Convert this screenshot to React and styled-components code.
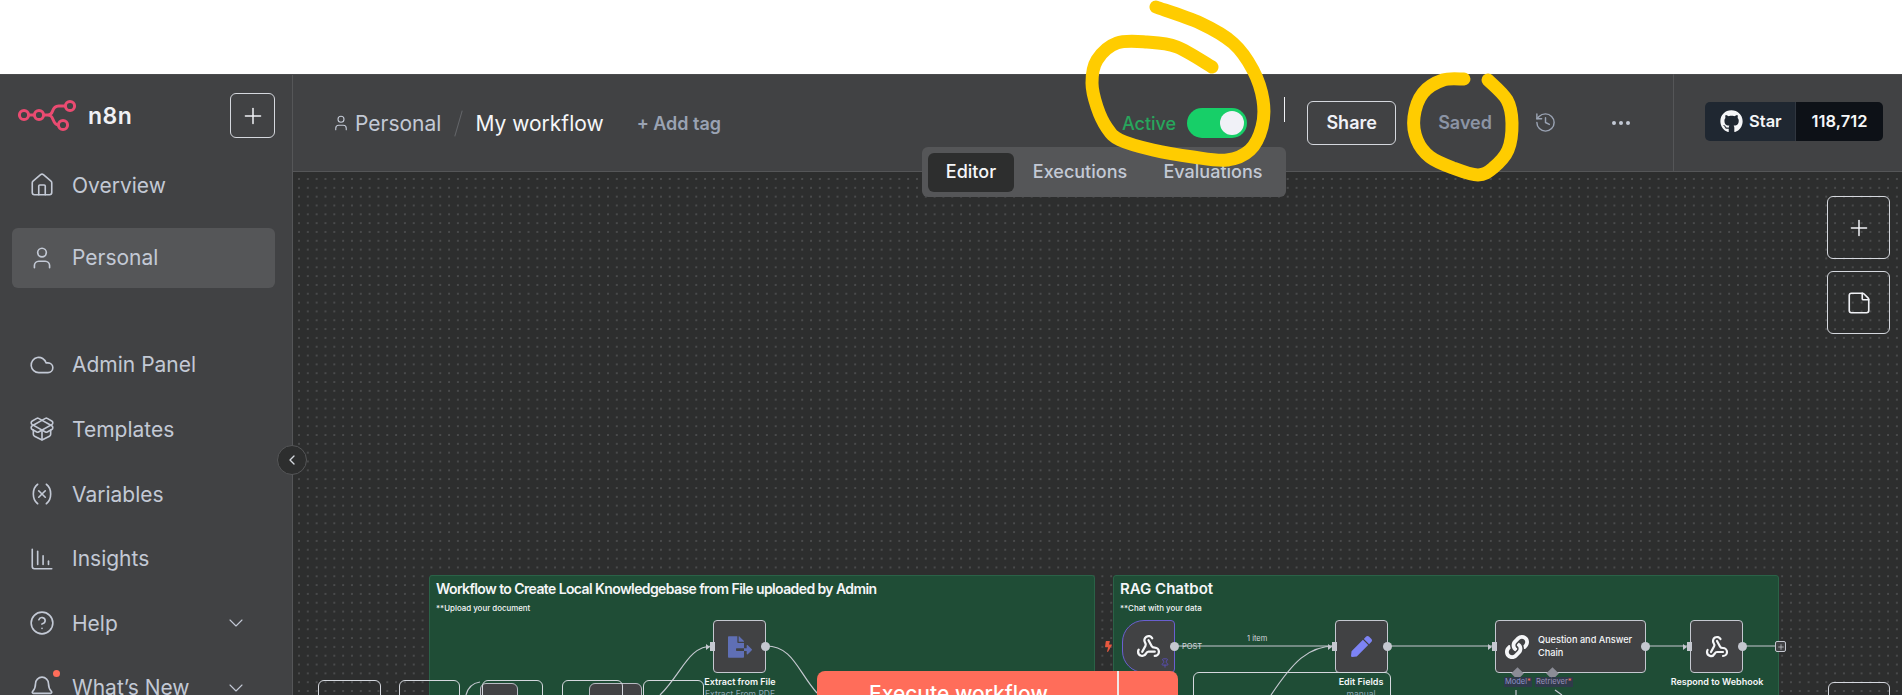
import React from "react";
import styled, { createGlobalStyle } from "styled-components";
import {
  Bell,
  ChartColumnDecreasing,
  ChevronDown,
  ChevronLeft,
  CircleHelp,
  Cloud,
  Ellipsis,
  History,
  House,
  PackageOpen,
  Pin,
  Plus,
  StickyNote as NoteIcon,
  User,
  Variable,
  Webhook,
} from "lucide-react";
import { FaBolt, FaFileExport, FaGithub, FaLink, FaPen } from "react-icons/fa";

const GlobalStyle = createGlobalStyle`
  html, body {
    margin: 0;
    height: 100%;
    background: #fff;
    overflow: hidden;
  }
  * {
    box-sizing: border-box;
  }
  body {
    font-family: Inter, "Liberation Sans", sans-serif;
  }
`;

const Page = styled.div`
  position: relative;
  height: 695px;
  padding-top: 74px;
  overflow: hidden;
`;

const Shell = styled.div`
  display: flex;
  height: 621px;
  border-top: 1px solid #4a4b4d;
  background: #414244;
`;

/* sidebar */
const Sidebar = styled.aside`
  position: relative;
  width: 293px;
  flex: none;
  padding: 18px 17px 0 12px;
  border-right: 1px solid #555658;
`;

const Brand = styled.div`
  display: flex;
  align-items: center;
  justify-content: space-between;
  height: 45px;
  padding-left: 5px;
`;

const LogoWrap = styled.div`
  display: flex;
  align-items: center;
  gap: 11px;
  color: #f0f1f5;
  font-size: 23px;
  font-weight: 600;
  letter-spacing: 0.5px;
`;

const SquareButton = styled.button`
  display: flex;
  align-items: center;
  justify-content: center;
  width: ${(p) => p.$size}px;
  height: ${(p) => p.$size}px;
  padding: 0;
  border: 1px solid #d5d8de;
  border-radius: 6px;
  background: #414244;
  color: #f0f1f5;
`;

const CanvasButton = styled(SquareButton)`
  background: transparent;
`;

const NavList = styled.nav`
  display: flex;
  flex-direction: column;
  margin-top: ${(p) => p.$top}px;
`;

const NavItem = styled.a`
  display: flex;
  align-items: center;
  height: ${(p) => (p.$active ? 60 : 64.6)}px;
  margin-top: ${(p) => (p.$active ? 10 : 0)}px;
  padding: 0 0 0 17px;
  gap: 17px;
  border-radius: 6px;
  background: ${(p) => (p.$active ? "#555658" : "transparent")};
  color: #c3c9d5;
  font-size: 21px;
  svg {
    flex: none;
  }
`;

const NavLabel = styled.span`
  flex: 1;
`;

const NavChevron = styled(ChevronDown)`
  margin-right: 27px;
  stroke-width: 1.1;
`;

const BellWrap = styled.span`
  position: relative;
  display: flex;
  &::after {
    content: "";
    position: absolute;
    top: -5px;
    right: -5px;
    width: 7px;
    height: 7px;
    border-radius: 50%;
    background: #ff6d5a;
  }
`;

const CollapseButton = styled.button`
  position: absolute;
  top: 370px;
  right: -15px;
  z-index: 5;
  display: flex;
  align-items: center;
  justify-content: center;
  width: 30px;
  height: 30px;
  padding: 0;
  border: 1px solid #555658;
  border-radius: 50%;
  background: #2d2e2e;
  color: #d5d8de;
`;

/* header */
const Main = styled.main`
  flex: 1;
  display: flex;
  flex-direction: column;
  min-width: 0;
`;

const Header = styled.header`
  position: relative;
  display: flex;
  align-items: stretch;
  flex: none;
  height: 97px;
  border-bottom: 1px solid #555658;
`;

const HeaderLeft = styled.div`
  flex: 1;
  display: flex;
  align-items: center;
  padding: 0 0 0 39px;
`;

const Crumb = styled.span`
  display: flex;
  align-items: center;
  gap: 5px;
  color: #c3c9d5;
  font-size: 21px;
`;

const Slash = styled.span`
  width: 1px;
  height: 27px;
  margin: 0 16px 0 17px;
  background: #64666a;
  transform: rotate(16deg);
`;

const WorkflowName = styled.span`
  color: #f5f6f8;
  font-size: 21px;
`;

const AddTag = styled.span`
  margin-left: 33px;
  color: #9aa3b3;
  font-size: 18px;
  font-weight: 600;
`;

const HeaderActions = styled.div`
  display: flex;
  align-items: center;
  width: 1380px;
  flex: none;
  margin-left: -830px;
  justify-content: flex-end;
  margin-top: -1px;
`;

const ActiveLabel = styled.span`
  margin-right: 11px;
  padding-top: 2px;
  color: #27a65c;
  font-size: 18px;
  font-weight: 500;
`;

const Toggle = styled.span`
  display: flex;
  align-items: center;
  justify-content: flex-end;
  width: 60px;
  height: 30px;
  padding-right: 3px;
  border-radius: 15px;
  background: #17cf68;
  &::after {
    content: "";
    width: 24px;
    height: 24px;
    border-radius: 50%;
    background: #f0f1f7;
  }
`;

const ThinRule = styled.span`
  width: 1px;
  height: 25px;
  margin: -26px 22px 0 37px;
  background: #f0f1f5;
`;

const ShareButton = styled.button`
  width: 89px;
  height: 44px;
  padding: 0;
  border: 1px solid #d5d8de;
  border-radius: 6px;
  background: transparent;
  color: #f0f1f7;
  font-family: inherit;
  font-size: 18px;
  font-weight: 600;
`;

const SavedLabel = styled.span`
  margin-left: 42px;
  color: #8b94a5;
  font-size: 18px;
  font-weight: 600;
`;

const HistoryIcon = styled(History)`
  margin-left: 42px;
  color: #9aa3b3;
`;

const MoreIcon = styled(Ellipsis)`
  margin-left: 52px;
  color: #c3c9d5;
`;

const StarArea = styled.div`
  display: flex;
  align-items: center;
  margin-left: 40px;
  height: 100%;
  padding: 0 19px 3px 31px;
  border-left: 1px solid #555658;
`;

const StarBadge = styled.div`
  display: flex;
  height: 39px;
  border-radius: 5px;
  overflow: hidden;
  color: #f5f6f8;
  font-size: 16.5px;
  font-weight: 600;
`;

const StarLeft = styled.span`
  display: flex;
  align-items: center;
  gap: 6px;
  width: 91px;
  padding-left: 15px;
  background: #1f2731;
  border-right: 1px solid #30363f;
`;

const StarCount = styled.span`
  display: flex;
  align-items: center;
  justify-content: center;
  width: 87px;
  background: #0d1117;
`;

const Tabs = styled.div`
  position: absolute;
  top: 72px;
  left: 629px;
  z-index: 3;
  display: flex;
  align-items: center;
  height: 50px;
  padding: 0 6px;
  border-radius: 6px;
  background: #555658;
`;

const Tab = styled.span`
  display: flex;
  align-items: center;
  justify-content: center;
  height: 39px;
  width: ${(p) => p.$w}px;
  padding-bottom: 1px;
  border-radius: 6px;
  background: ${(p) => (p.$active ? "#2d2e2e" : "transparent")};
  color: ${(p) => (p.$active ? "#f5f6f8" : "#c3c9d5")};
  font-size: 18px;
  font-weight: 500;
`;

/* canvas */
const Canvas = styled.section`
  position: relative;
  flex: 1;
  overflow: hidden;
  background-color: #2d2e2e;
  background-image: radial-gradient(circle at 1px 1px, #4a4b4c 0.7px, transparent 1px);
  background-size: 8.84px 8.84px;
  background-position: 5px 6px;
`;

const Sticky = styled.div`
  position: absolute;
  top: 403px;
  left: ${(p) => p.$x}px;
  width: ${(p) => p.$w}px;
  height: 130px;
  padding: 4px 6px;
  border: 1px solid #2a6247;
  border-radius: 3px;
  background: #1f4d36;
  color: #f5f6f8;
`;

const StickyTitle = styled.div`
  font-size: ${(p) => p.$size}px;
  font-weight: 600;
  letter-spacing: ${(p) => p.$spacing || 0}px;
  line-height: 18px;
`;

const StickyNote = styled.div`
  margin-top: 4px;
  font-size: 7.9px;
  font-weight: 500;
  line-height: 12px;
`;

const Edges = styled.svg`
  position: absolute;
  inset: 0;
  width: 100%;
  height: 100%;
  z-index: 1;
  fill: none;
  stroke: #c5c8d0;
  stroke-width: 1.2;
`;

const Node = styled.div`
  position: absolute;
  left: ${(p) => p.$x}px;
  top: 448px;
  z-index: 2;
  display: flex;
  align-items: center;
  justify-content: center;
  gap: 9px;
  width: ${(p) => p.$w || 53}px;
  height: 53px;
  border: 1.5px solid ${(p) => (p.$pinned ? "#6a5fd0" : "#c5c8d0")};
  border-radius: ${(p) => (p.$pinned ? "22px 4px 4px 22px" : "4px")};
  background: #414244;
  color: #f5f6f8;
`;

const NodeName = styled.div`
  position: absolute;
  left: ${(p) => p.$x}px;
  top: 504px;
  z-index: 2;
  width: 130px;
  transform: translateX(-50%);
  color: #f5f6f8;
  font-size: 9px;
  font-weight: 600;
  line-height: 12px;
  text-align: center;
`;

const NodeSub = styled.div`
  color: #8fa7b5;
  font-size: 8.5px;
  font-weight: 400;
`;

const Port = styled.span`
  position: absolute;
  top: 50%;
  right: -4.5px;
  width: 9px;
  height: 9px;
  margin-top: -4.5px;
  border-radius: 50%;
  background: #c5c8d0;
`;

const InPort = styled.span`
  position: absolute;
  top: 50%;
  left: -4px;
  width: 5px;
  height: 9px;
  margin-top: -4.5px;
  background: #c5c8d0;
  &::before {
    content: "";
    position: absolute;
    left: -4px;
    top: 1.5px;
    border-left: 4px solid #c5c8d0;
    border-top: 3px solid transparent;
    border-bottom: 3px solid transparent;
  }
`;

const Diamond = styled.span`
  position: absolute;
  left: ${(p) => p.$x}px;
  bottom: -6px;
  width: 9px;
  height: 9px;
  background: #8b8c96;
  transform: rotate(45deg);
`;

const PinMark = styled(Pin)`
  position: absolute;
  right: 4px;
  bottom: 4px;
  color: #5b4fc0;
`;

const NodeText = styled.span`
  width: 98px;
  font-size: 9.2px;
  font-weight: 500;
  line-height: 12.5px;
`;

const Bolt = styled(FaBolt)`
  position: absolute;
  left: 810px;
  top: 469px;
  z-index: 2;
  color: #e5583f;
`;

const EdgeLabel = styled.span`
  position: absolute;
  left: ${(p) => p.$x}px;
  top: ${(p) => p.$y}px;
  z-index: 2;
  padding: 0 1px;
  background: ${(p) => p.$bg || "transparent"};
  color: ${(p) => p.$color || "#d5d8de"};
  font-size: 7.5px;
  line-height: 10px;
`;

const Required = styled.span`
  color: #ff6d5a;
`;

const AddNode = styled.span`
  position: absolute;
  left: 1482px;
  top: 469px;
  z-index: 2;
  display: flex;
  align-items: center;
  justify-content: center;
  width: 11px;
  height: 11px;
  border: 1px solid #c5c8d0;
  border-radius: 2px;
  background: #414244;
  color: #d5d8de;
`;

const GhostBox = styled.div`
  position: absolute;
  left: ${(p) => p.$x}px;
  top: ${(p) => p.$y}px;
  z-index: ${(p) => (p.$solid ? 1 : 3)};
  width: ${(p) => p.$w}px;
  height: 80px;
  border: 1px solid ${(p) => (p.$solid ? "#b9bcc4" : "#d5d8de")};
  border-radius: 6px;
  background: ${(p) => (p.$solid ? "#414244" : "transparent")};
`;

const ExecuteButton = styled.button`
  position: absolute;
  left: 524px;
  top: 499px;
  z-index: 4;
  display: flex;
  width: 361px;
  height: 70px;
  padding: 0;
  border: 0;
  border-radius: 8px;
  background: #ff6d5a;
  color: #fff;
  font-family: inherit;
  font-size: 21px;
  font-weight: 500;
`;

const ExecuteLabel = styled.span`
  width: 302px;
  height: 100%;
  padding: 10px 0 0 52px;
  border-right: 2px solid #f0e9e6;
  text-align: left;
  white-space: nowrap;
`;

const ZoomRail = styled.div`
  position: absolute;
  top: 24px;
  right: 12px;
  z-index: 3;
  display: flex;
  flex-direction: column;
  gap: 12px;
`;

const CornerButton = styled(GhostBox)`
  left: 1535px;
  top: 510px;
  width: 62px;
`;

const Scribble = styled.svg`
  position: absolute;
  inset: 0;
  z-index: 10;
  width: 1902px;
  height: 695px;
  fill: none;
  stroke: #ffcc00;
  stroke-width: 13;
  stroke-linecap: round;
  stroke-linejoin: round;
  pointer-events: none;
`;

const smooth = (pts) => {
  let d = `M${pts[0][0]} ${pts[0][1]}`;
  for (let i = 0; i < pts.length - 1; i++) {
    const p0 = pts[i - 1] || pts[i];
    const p1 = pts[i];
    const p2 = pts[i + 1];
    const p3 = pts[i + 2] || p2;
    d += ` C${p1[0] + (p2[0] - p0[0]) / 6} ${p1[1] + (p2[1] - p0[1]) / 6} ${p2[0] - (p3[0] - p1[0]) / 6} ${p2[1] - (p3[1] - p1[1]) / 6} ${p2[0]} ${p2[1]}`;
  }
  return d;
};

const activeRing = [
  [1156, 7], [1200, 23], [1233, 43], [1253, 70], [1263, 100], [1262, 127], [1250, 150],
  [1227, 160], [1193, 157], [1153, 150], [1120, 140], [1107, 128], [1097, 107], [1092, 83],
  [1097, 60], [1117, 43], [1147, 42], [1177, 47], [1212, 67],
];

const savedRing = [
  [1464, 79], [1443, 80], [1423, 93], [1414, 117], [1417, 140], [1430, 157], [1453, 168],
  [1478, 175], [1493, 168], [1508, 150], [1512, 123], [1507, 100], [1488, 80],
];

const N8nLogo = () => (
  <svg width="60" height="33" viewBox="0 0 60 33" fill="none" stroke="#ea4b71" strokeWidth="3">
    <circle cx="7" cy="16" r="4.6" />
    <circle cx="22" cy="16" r="4.6" />
    <circle cx="53" cy="7" r="4.6" />
    <circle cx="46" cy="26" r="4.6" />
    <path d="M11.600 16h5.800M26.600 16h4c3 0 4 -1 5 -4s2.500 -5 6 -5h6.800M30.600 16c3 0 4 1 5.400 4.500s2.500 5.500 5.400 5.500" />
  </svg>
);

const topItems = [
  { label: "Overview", Icon: House },
  { label: "Personal", Icon: User, active: true },
];

const lowerItems = [
  { label: "Admin Panel", Icon: Cloud },
  { label: "Templates", Icon: PackageOpen },
  { label: "Variables", Icon: Variable },
  { label: "Insights", Icon: ChartColumnDecreasing },
  { label: "Help", Icon: CircleHelp, more: true },
];

const App = () => {
  return (
    <Page>
      <GlobalStyle />
      <Shell>
        <Sidebar>
          <Brand>
            <LogoWrap>
              <N8nLogo />
              n8n
            </LogoWrap>
            <SquareButton $size={45}>
              <Plus size={26} strokeWidth={1.4} />
            </SquareButton>
          </Brand>
          <NavList $top={15}>
            {topItems.map(({ label, Icon, active }) => (
              <NavItem key={label} $active={active}>
                <Icon size={26} strokeWidth={1.5} />
                <NavLabel>{label}</NavLabel>
              </NavItem>
            ))}
          </NavList>
          <NavList $top={45}>
            {lowerItems.map(({ label, Icon, more }) => (
              <NavItem key={label}>
                <Icon size={26} strokeWidth={1.5} />
                <NavLabel>{label}</NavLabel>
                {more && <NavChevron size={24} />}
              </NavItem>
            ))}
            <NavItem>
              <BellWrap>
                <Bell size={26} strokeWidth={1.5} />
              </BellWrap>
              <NavLabel>What’s New</NavLabel>
              <NavChevron size={24} />
            </NavItem>
          </NavList>
          <CollapseButton>
            <ChevronLeft size={16} />
          </CollapseButton>
        </Sidebar>
        <Main>
          <Header>
            <HeaderLeft>
              <Crumb>
                <User size={18} strokeWidth={1.5} />
                Personal
              </Crumb>
              <Slash />
              <WorkflowName>My workflow</WorkflowName>
              <AddTag>+ Add tag</AddTag>
            </HeaderLeft>
            <HeaderActions>
              <ActiveLabel>Active</ActiveLabel>
              <Toggle />
              <ThinRule />
              <ShareButton>Share</ShareButton>
              <SavedLabel>Saved</SavedLabel>
              <HistoryIcon size={23} strokeWidth={1.5} />
              <MoreIcon size={24} />
              <StarArea>
                <StarBadge>
                  <StarLeft>
                    <FaGithub size={23} />
                    Star
                  </StarLeft>
                  <StarCount>118,712</StarCount>
                </StarBadge>
              </StarArea>
            </HeaderActions>
            <Tabs>
              <Tab $w={86} $active>
                Editor
              </Tab>
              <Tab $w={132}>Executions</Tab>
              <Tab $w={134}>Evaluations</Tab>
            </Tabs>
          </Header>
          <Canvas>
            <Sticky $x={136} $w={666}>
              <StickyTitle $size={14} $spacing={-0.6}>Workflow to Create Local Knowledgebase from File uploaded by Admin</StickyTitle>
              <StickyNote>**Upload your document</StickyNote>
            </Sticky>
            <Sticky $x={820} $w={666}>
              <StickyTitle $size={15}>RAG Chatbot</StickyTitle>
              <StickyNote>**Chat with your data</StickyNote>
            </Sticky>

            <Edges>
              <path d="M367 523C390 500 395 474 420 474" />
              <path d="M473 474C500 474 505 500 524 521" />
              <path d="M173 523C175 515 180 511 187 510" />
              <path d="M882 474H1042M1094 474H1202M1352 474H1397M1450 474H1482" />
              <path d="M978 523C1000 490 1015 474 1042 474" />
              <path d="M1223 518V523M1262 518L1269 523" />
            </Edges>

            <GhostBox $x={25} $y={508} $w={63} />
            <GhostBox $x={106} $y={508} $w={61} />
            <GhostBox $x={189} $y={508} $w={61} />
            <GhostBox $x={269} $y={508} $w={61} />
            <GhostBox $x={350} $y={508} $w={61} />
            <GhostBox $x={187} $y={511} $w={38} $solid />
            <GhostBox $x={296} $y={511} $w={53} $solid />
            <GhostBox $x={900} $y={500} $w={198} />

            <Node $x={420}>
              <InPort />
              <FaFileExport size={24} color="#5f6fb5" />
              <Port />
            </Node>
            <NodeName $x={447}>
              Extract from File
              <NodeSub>Extract From PDF</NodeSub>
            </NodeName>

            <Bolt size={11} />
            <Node $x={829} $pinned>
              <Webhook size={25} strokeWidth={2.2} />
              <PinMark size={10} />
              <Port />
            </Node>
            <EdgeLabel $x={888} $y={470}>POST</EdgeLabel>
            <EdgeLabel $x={953} $y={462}>1 item</EdgeLabel>

            <Node $x={1042}>
              <InPort />
              <FaPen size={21} color="#7d83f5" />
              <Port />
            </Node>
            <NodeName $x={1068}>
              Edit Fields
              <NodeSub>manual</NodeSub>
            </NodeName>

            <Node $x={1202} $w={151}>
              <InPort />
              <FaLink size={24} />
              <NodeText>Question and Answer Chain</NodeText>
              <Port />
              <Diamond $x={17} />
              <Diamond $x={52} />
            </Node>
            <EdgeLabel $x={1211} $y={505} $bg="#2f3a4a" $color="#8f93c9">Model<Required>*</Required></EdgeLabel>
            <EdgeLabel $x={1242} $y={505} $bg="#2f3a4a" $color="#9a90b8">Retriever<Required>*</Required></EdgeLabel>

            <Node $x={1397}>
              <InPort />
              <Webhook size={24} strokeWidth={2.2} />
              <Port />
            </Node>
            <NodeName $x={1424}>Respond to Webhook</NodeName>

            <AddNode>
              <Plus size={8} />
            </AddNode>

            <ExecuteButton>
              <ExecuteLabel>Execute workflow</ExecuteLabel>
            </ExecuteButton>

            <ZoomRail>
              <CanvasButton $size={63}>
                <Plus size={26} strokeWidth={1.4} />
              </CanvasButton>
              <CanvasButton $size={63}>
                <NoteIcon size={26} strokeWidth={1.5} />
              </CanvasButton>
            </ZoomRail>
            <CornerButton $w={62} />
          </Canvas>
        </Main>
      </Shell>
      <Scribble viewBox="0 0 1902 695">
        <path d={smooth(activeRing)} />
        <path d={smooth(savedRing)} />
      </Scribble>
    </Page>
  );
};

export default App;
